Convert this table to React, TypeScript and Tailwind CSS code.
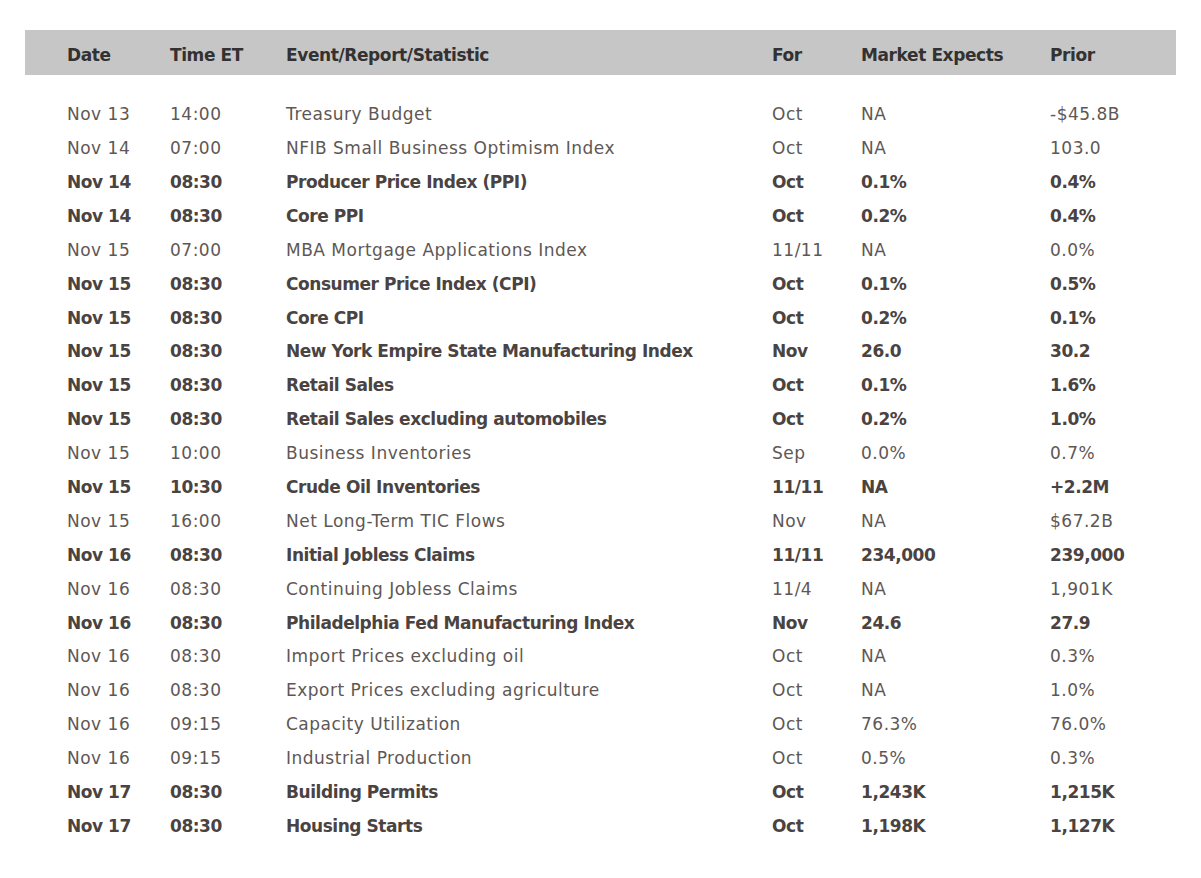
const rows: [string, string, string, string, string, string, boolean][] = [
  ["Nov 13", "14:00", "Treasury Budget", "Oct", "NA", "-$45.8B", false],
  ["Nov 14", "07:00", "NFIB Small Business Optimism Index", "Oct", "NA", "103.0", false],
  ["Nov 14", "08:30", "Producer Price Index (PPI)", "Oct", "0.1%", "0.4%", true],
  ["Nov 14", "08:30", "Core PPI", "Oct", "0.2%", "0.4%", true],
  ["Nov 15", "07:00", "MBA Mortgage Applications Index", "11/11", "NA", "0.0%", false],
  ["Nov 15", "08:30", "Consumer Price Index (CPI)", "Oct", "0.1%", "0.5%", true],
  ["Nov 15", "08:30", "Core CPI", "Oct", "0.2%", "0.1%", true],
  ["Nov 15", "08:30", "New York Empire State Manufacturing Index", "Nov", "26.0", "30.2", true],
  ["Nov 15", "08:30", "Retail Sales", "Oct", "0.1%", "1.6%", true],
  ["Nov 15", "08:30", "Retail Sales excluding automobiles", "Oct", "0.2%", "1.0%", true],
  ["Nov 15", "10:00", "Business Inventories", "Sep", "0.0%", "0.7%", false],
  ["Nov 15", "10:30", "Crude Oil Inventories", "11/11", "NA", "+2.2M", true],
  ["Nov 15", "16:00", "Net Long-Term TIC Flows", "Nov", "NA", "$67.2B", false],
  ["Nov 16", "08:30", "Initial Jobless Claims", "11/11", "234,000", "239,000", true],
  ["Nov 16", "08:30", "Continuing Jobless Claims", "11/4", "NA", "1,901K", false],
  ["Nov 16", "08:30", "Philadelphia Fed Manufacturing Index", "Nov", "24.6", "27.9", true],
  ["Nov 16", "08:30", "Import Prices excluding oil", "Oct", "NA", "0.3%", false],
  ["Nov 16", "08:30", "Export Prices excluding agriculture", "Oct", "NA", "1.0%", false],
  ["Nov 16", "09:15", "Capacity Utilization", "Oct", "76.3%", "76.0%", false],
  ["Nov 16", "09:15", "Industrial Production", "Oct", "0.5%", "0.3%", false],
  ["Nov 17", "08:30", "Building Permits", "Oct", "1,243K", "1,215K", true],
  ["Nov 17", "08:30", "Housing Starts", "Oct", "1,198K", "1,127K", true],
];

const cols = "grid grid-cols-[103px_116px_486px_89px_189px_1fr]";

export default function App() {
  return (
    <div className="w-[1201px] h-[878px] bg-white pt-[30px] pl-[25px] font-['DejaVu_Sans',sans-serif]">
      <div className={`${cols} w-[1151px] h-[45px] items-center bg-[#c6c6c6] pl-[42px] pt-[7px] text-[17px] font-bold tracking-[-0.4px] text-[#333131]`}>
        <div>Date</div>
        <div>Time ET</div>
        <div>Event/Report/Statistic</div>
        <div>For</div>
        <div>Market Expects</div>
        <div>Prior</div>
      </div>
      <div className="mt-[23px] pl-[42px]">
        {rows.map((r, i) => (
          <div
            key={i}
            className={`${cols} h-[33.9px] items-center text-[17px] ${
              r[6]
                ? "font-bold tracking-[-0.45px] text-[#4a4341]"
                : "tracking-[0.5px] text-[#5e5755]"
            }`}
          >
            <div>{r[0]}</div>
            <div>{r[1]}</div>
            <div>{r[2]}</div>
            <div>{r[3]}</div>
            <div>{r[4]}</div>
            <div>{r[5]}</div>
          </div>
        ))}
      </div>
    </div>
  );
}
